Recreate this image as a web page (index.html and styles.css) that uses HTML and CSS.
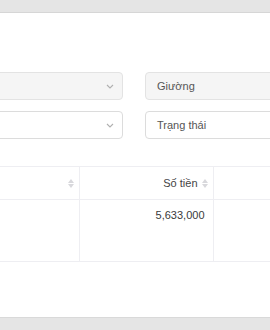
FILE: index.html
```html
<!DOCTYPE html>
<html lang="vi">
<head>
    <meta charset="UTF-8">
    <meta name="viewport" content="width=device-width, initial-scale=1.0">
    <title>Danh sách</title>
    <link rel="stylesheet" href="styles.css">
</head>
<body>
    <div class="top-bar"></div>
    <div class="content">
        <div class="filters">
            <div class="select disabled">
                <span class="value"></span>
                <svg class="arrow" width="8" height="5" viewBox="0 0 8 5"><path d="M1 1l3 3 3-3" fill="none" stroke="#b0b0b0" stroke-width="1.1"/></svg>
            </div>
            <div class="select disabled">
                <span class="value">Giường</span>
            </div>
            <div class="select">
                <span class="value"></span>
                <svg class="arrow" width="8" height="5" viewBox="0 0 8 5"><path d="M1 1l3 3 3-3" fill="none" stroke="#b0b0b0" stroke-width="1.1"/></svg>
            </div>
            <div class="select">
                <span class="value">Trạng thái</span>
            </div>
        </div>

        <table class="data-table">
            <thead>
                <tr>
                    <th class="col-1">
                        <span class="th-inner">
                            <span></span>
                            <span class="sorter"><span class="up"></span><span class="down"></span></span>
                        </span>
                    </th>
                    <th class="col-2">
                        <span class="th-inner">
                            <span>Số tiền</span>
                            <span class="sorter"><span class="up"></span><span class="down"></span></span>
                        </span>
                    </th>
                    <th class="col-3"></th>
                </tr>
            </thead>
            <tbody>
                <tr>
                    <td></td>
                    <td class="amount">5,633,000</td>
                    <td></td>
                </tr>
            </tbody>
        </table>
    </div>
    <div class="bottom-bar"></div>
</body>
</html>
```

FILE: styles.css
```css
* {
    margin: 0;
    padding: 0;
    box-sizing: border-box;
    font-family: "Liberation Sans", Arial, sans-serif;
}

body {
    width: 270px;
    height: 330px;
    overflow: hidden;
    background: #fff;
    color: #3a3a3a;
    font-size: 11px;
}

.top-bar {
    height: 13px;
    background: #e5e5e5;
    border-bottom: 1px solid #d6d6d6;
}

.content {
    height: 304px;
    padding-top: 59px;
    overflow: hidden;
}

.filters {
    display: grid;
    grid-template-columns: 200px 200px;
    column-gap: 22px;
    row-gap: 11px;
    margin-left: -77px;
}

.select {
    display: flex;
    align-items: center;
    justify-content: space-between;
    height: 28px;
    padding: 0 11px;
    border: 1px solid #dcdcdc;
    border-radius: 4px;
    background: #fff;
    color: #555;
}

.select.disabled {
    background: #f5f5f5;
    border-color: #e3e3e3;
}

.arrow {
    margin-right: -3px;
}

.data-table {
    margin-top: 27px;
    margin-left: -41px;
    border-collapse: collapse;
    table-layout: fixed;
    width: 400px;
}

.col-1 { width: 120px; }
.col-2 { width: 134px; }

.data-table th,
.data-table td {
    border-top: 1px solid #eeeef2;
    border-bottom: 1px solid #eeeef2;
    border-right: 1px solid #eeeef2;
}

.data-table th {
    height: 33px;
    font-weight: normal;
    padding: 0 5px 0 8px;
    color: #444;
}

.th-inner {
    display: flex;
    align-items: center;
    justify-content: flex-end;
    gap: 4px;
}

.sorter {
    display: flex;
    flex-direction: column;
    gap: 1px;
}

.sorter .up,
.sorter .down {
    width: 0;
    height: 0;
    border-left: 3.5px solid transparent;
    border-right: 3.5px solid transparent;
}

.sorter .up {
    border-bottom: 4px solid #d8d8dc;
}

.sorter .down {
    border-top: 4px solid #d8d8dc;
}

.data-table td {
    height: 62px;
    vertical-align: top;
    padding: 9px 8px;
}

.amount {
    text-align: right;
    padding-right: 8px;
}

.bottom-bar {
    height: 13px;
    background: #e5e5e5;
    border-top: 1px solid #d9d9d9;
}
```
